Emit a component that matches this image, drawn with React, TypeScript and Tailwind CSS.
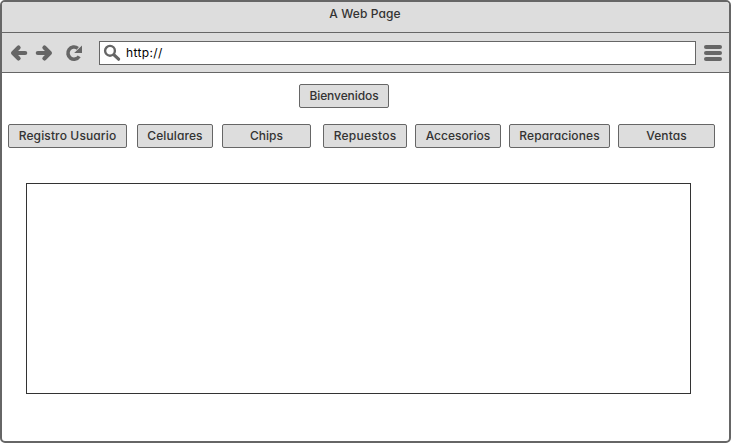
import type { ReactNode } from "react";

type ButtonProps = { children: string; className: string; textClass?: string };

function Button({ children, className, textClass = "" }: ButtonProps) {
  return (
    <button
      className={`flex h-6 shrink-0 items-center justify-center rounded-[2px] border border-[#666] bg-[#ddd] leading-none whitespace-nowrap ${className}`}
    >
      <span className={textClass}>{children}</span>
    </button>
  );
}

function Stroke({ children, className }: { children: ReactNode; className: string }) {
  return (
    <svg viewBox="0 0 18 18" className={`h-[18px] w-[18px] shrink-0 ${className}`} fill="none" stroke="#666" strokeLinecap="round" strokeLinejoin="round">
      {children}
    </svg>
  );
}

const tabs = [
  { label: "Registro Usuario", box: "w-[119px]", text: "tracking-[0.13px]" },
  { label: "Celulares", box: "ml-[10px] w-[76px]", text: "tracking-[0.1px]" },
  { label: "Chips", box: "ml-[9px] w-[89px]", text: "" },
  { label: "Repuestos", box: "ml-[12px] w-[84px]", text: "tracking-[0.25px]" },
  { label: "Accesorios", box: "ml-[8px] w-[86px]", text: "tracking-[0.01px]" },
  { label: "Reparaciones", box: "ml-[8px] w-[101px]", text: "tracking-[0.1px]" },
  { label: "Ventas", box: "ml-[8px] w-[97px]", text: "tracking-[0.1px]" },
];

export default function App() {
  return (
    <div className="flex h-[443px] w-[731px] flex-col overflow-hidden rounded-[5px] border-2 border-[#666] bg-white font-['Inter',sans-serif] text-[12px] font-medium text-[#333] [font-feature-settings:'cv11']">
      <header className="flex h-[31px] shrink-0 justify-center border-b border-[#666] bg-[#ddd] pt-[4px] pr-px leading-4 tracking-[0.1px]">
        A Web Page
      </header>
      <div className="flex h-10 shrink-0 items-center border-b border-[#666] bg-[#ddd]">
        <Stroke className="ml-[8px]">
          <path d="M8.6 3.6 3.1 9l5.5 5.4M4 9h11.2" strokeWidth="4.2" />
        </Stroke>
        <Stroke className="ml-[7px]">
          <path d="M9.4 3.6 14.9 9l-5.5 5.4M14 9H2.8" strokeWidth="4.2" />
        </Stroke>
        <Stroke className="ml-[12px]">
          <path d="M12.8 4.3A6.1 6.1 0 1 0 14.2 12.4" strokeWidth="3.6" strokeLinecap="butt" />
          <path d="M17 1.6v7.4H9.2z" fill="#666" stroke="none" />
        </Stroke>
        <div className="ml-[16px] flex h-6 w-[597px] items-center border border-[#666] bg-white text-black">
          <Stroke className="ml-[3px]">
            <circle cx="7" cy="6.8" r="4.9" strokeWidth="2.4" />
            <path d="m11 10.8 4.6 4.4" strokeWidth="3.2" />
          </Stroke>
          <span className="ml-[5px] font-normal tracking-[0.35px]">http://</span>
        </div>
        <div className="ml-[8px] flex w-[18px] flex-col gap-[2px]">
          <i className="h-1 rounded-full bg-[#666]" />
          <i className="h-1 rounded-full bg-[#666]" />
          <i className="h-1 rounded-full bg-[#666]" />
        </div>
      </div>
      <main className="flex flex-col items-start">
        <Button className="mt-[11px] ml-[297px] w-[90px]" textClass="tracking-[-0.08px]">Bienvenidos</Button>
        <nav className="mt-4 ml-[6px] flex">
          {tabs.map((t) => (
            <Button key={t.label} className={t.box} textClass={t.text}>
              {t.label}
            </Button>
          ))}
        </nav>
        <section className="mt-[35px] ml-6 h-[211px] w-[665px] border border-[#333]" />
      </main>
    </div>
  );
}
